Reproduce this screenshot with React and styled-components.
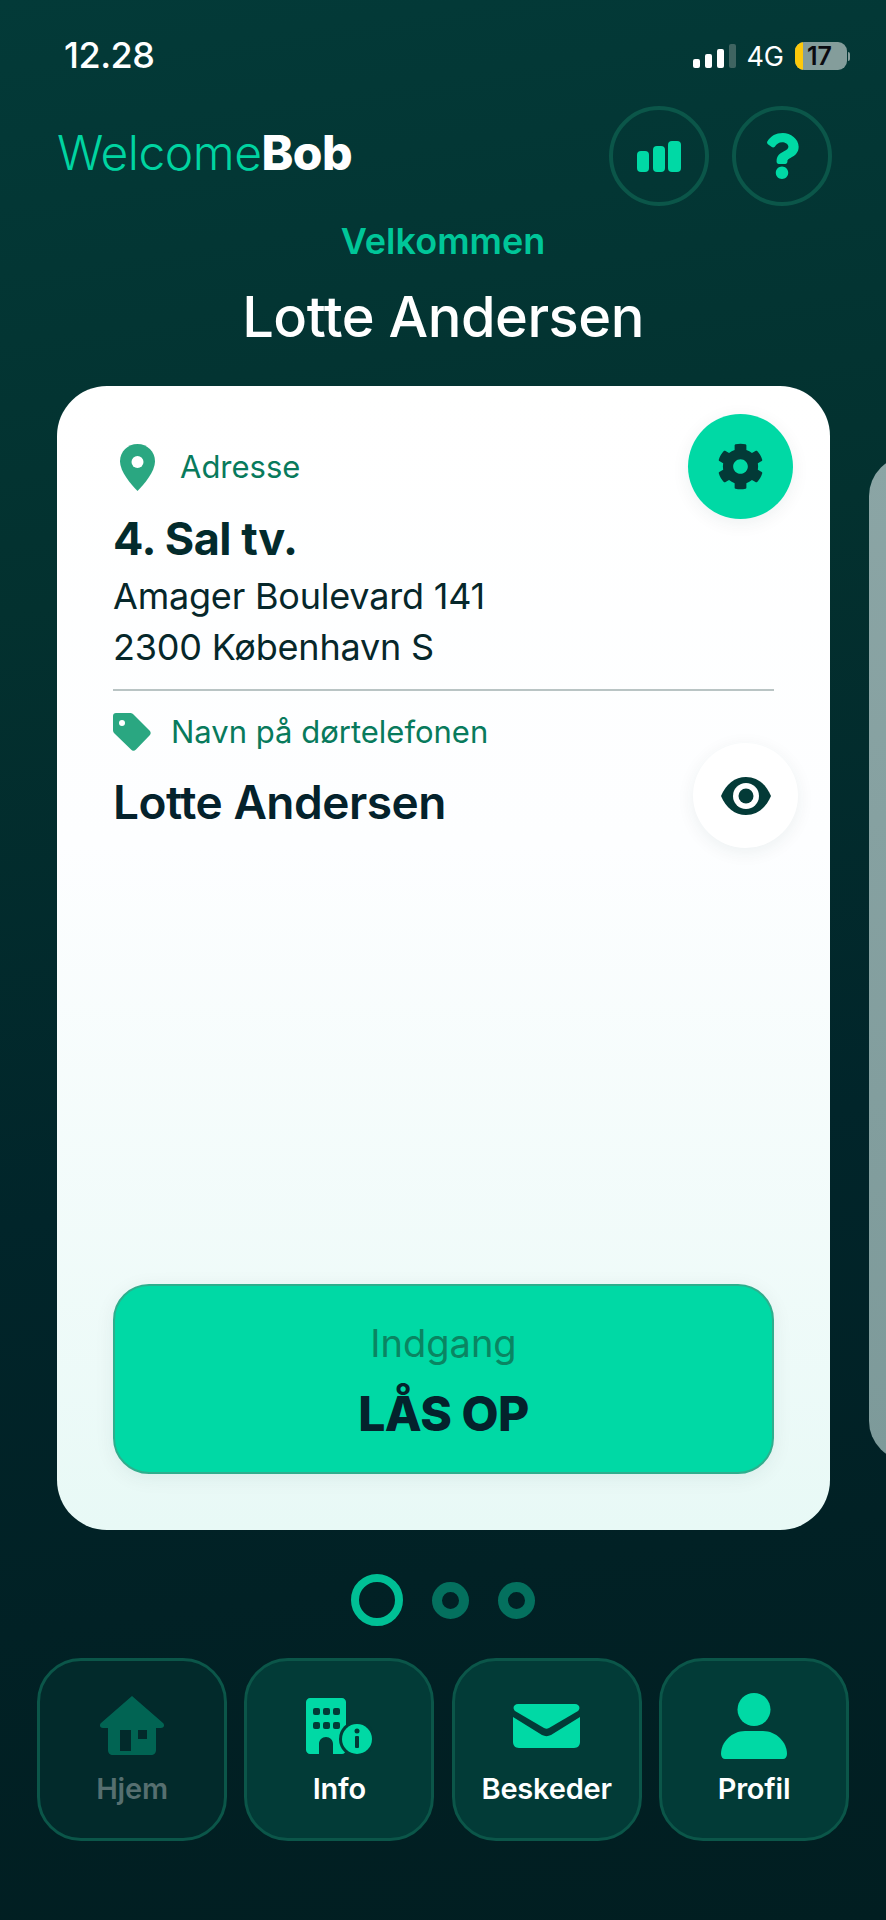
import styled, { createGlobalStyle } from "styled-components";
import { FaCog, FaQuestion } from "react-icons/fa";

const GlobalStyle = createGlobalStyle`
    html, body {
        margin: 0;
        padding: 0;
        background: #012024;
    }
    * {
        box-sizing: border-box;
    }
`

const Page = styled.div`
    width: 886px;
    height: 1920px;
    overflow: hidden;
    display: flex;
    flex-direction: column;
    font-family: "Inter", "Noto Sans", sans-serif;
    background: linear-gradient(172deg, #033a38 0%, #03312f 30%, #01252a 60%, #012125 80%, #011e21 100%);
`

const StatusBar = styled.div`
    height: 106px;
    padding: 36px 36px 0 64px;
    display: flex;
    justify-content: space-between;
    align-items: flex-start;
    color: #fff;
`
const Time = styled.div`
    font-size: 36px;
    line-height: 38px;
    font-weight: 500;
    letter-spacing: -0.5px;
`
const StatusIcons = styled.div`
    display: flex;
    align-items: center;
    height: 36px;
    margin-top: 2px;
`
const Signal = styled.div`
    display: flex;
    align-items: flex-end;
    gap: 5px;
    height: 24px;
    margin-right: 10px;
`
const SignalBar = styled.div`
    width: 7px;
    height: ${props => props.h}px;
    border-radius: 2px;
    background: ${props => props.off ? "#3f6461" : "#fff"};
`
const Network = styled.div`
    font-size: 27px;
    font-weight: 400;
    margin-right: 11px;
`
const BatteryWrap = styled.div`
    display: flex;
    align-items: center;
    gap: 1px;
`
const Battery = styled.div`
    width: 52px;
    height: 28px;
    border-radius: 9px;
    overflow: hidden;
    display: flex;
    align-items: center;
    background: #849d9b;
    color: #0b0b10;
    font-size: 25px;
    font-weight: 600;
`
const BatteryFill = styled.div`
    width: 8px;
    height: 100%;
    background: #fdc90a;
    margin-right: 4px;
`
const BatteryTip = styled.div`
    width: 2px;
    height: 9px;
    border-radius: 0 2px 2px 0;
    background: #849d9b;
`

const Header = styled.div`
    height: 100px;
    padding: 0 54px 0 57px;
    display: flex;
    align-items: center;
    justify-content: space-between;
`
const Logo = styled.div`
    font-size: 48px;
    font-weight: 300;
    letter-spacing: -0.5px;
    color: #00d4a1;
    margin-top: -8px;
`
const LogoBold = styled.span`
    font-weight: 800;
    color: #fff;
`
const HeaderButtons = styled.div`
    display: flex;
    gap: 23px;
`
const RoundButton = styled.div`
    width: 100px;
    height: 100px;
    border-radius: 50%;
    border: 4px solid #0b5649;
    display: flex;
    align-items: center;
    justify-content: center;
    color: #00d9a5;
`

const Greeting = styled.div`
    margin-top: 11px;
    text-align: center;
    font-size: 36px;
    line-height: 48px;
    font-weight: 600;
    color: #00c699;
`
const UserName = styled.h1`
    margin: 18px 0 0;
    text-align: center;
    font-size: 56px;
    line-height: 68px;
    font-weight: 500;
    letter-spacing: -0.5px;
    color: #fff;
`

const Carousel = styled.div`
    margin-top: 35px;
    padding-left: 57px;
    display: flex;
    align-items: center;
    gap: 39px;
`
const Card = styled.div`
    position: relative;
    flex: none;
    width: 773px;
    height: 1144px;
    padding: 57px 56px 56px;
    display: flex;
    flex-direction: column;
    border-radius: 50px;
    background: linear-gradient(180deg, #ffffff 0%, #fdfeff 40%, #e8f9f6 100%);
`
const NextCard = styled.div`
    flex: none;
    width: 772px;
    height: 1005px;
    border-radius: 40px;
    background: linear-gradient(180deg, #8ba5a5 0%, #7d9a9a 100%);
`
const FloatingButton = styled.div`
    position: absolute;
    top: ${props => props.top}px;
    right: ${props => props.right}px;
    width: 105px;
    height: 105px;
    border-radius: 50%;
    display: flex;
    align-items: center;
    justify-content: center;
    color: #033a37;
    background: ${props => props.green ? "#00d9a5" : "#fff"};
    box-shadow: 0 4px 18px rgba(0, 60, 50, 0.07);
`
const LabelRow = styled.div`
    display: flex;
    align-items: center;
    gap: ${props => props.gap}px;
    padding-left: ${props => props.inset}px;
    height: 48px;
`
const Label = styled.div`
    font-size: 31px;
    line-height: 40px;
    font-weight: 400;
    color: #087a5c;
`
const Floor = styled.div`
    margin: 20px 0 4px;
    font-size: 45px;
    line-height: 56px;
    font-weight: 700;
    letter-spacing: -0.5px;
    color: #032b2c;
`
const AddressLine = styled.div`
    font-size: 36px;
    line-height: 51px;
    font-weight: 400;
    letter-spacing: -0.2px;
    color: #06272a;
`
const Divider = styled.div`
    margin-top: 16px;
    height: 2px;
    background: #b9c4c4;
`
const DoorRow = styled.div`
    margin-top: 17px;
`
const DoorName = styled.div`
    margin-top: 18px;
    font-size: 46px;
    line-height: 56px;
    font-weight: 600;
    letter-spacing: -0.5px;
    color: #04222c;
`
const UnlockButton = styled.div`
    margin-top: auto;
    height: 190px;
    border-radius: 36px;
    border: 2px solid #2fae8d;
    background: #00d9a5;
    box-shadow: 0 4px 20px rgba(0, 60, 50, 0.07);
    display: flex;
    flex-direction: column;
    align-items: center;
    padding-top: 34px;
`
const UnlockLabel = styled.div`
    font-size: 38px;
    line-height: 46px;
    font-weight: 400;
    color: #0a8562;
`
const UnlockText = styled.div`
    margin-top: 20px;
    font-size: 48px;
    line-height: 56px;
    font-weight: 800;
    letter-spacing: -0.5px;
    color: #04222c;
`

const Dots = styled.div`
    margin-top: 44px;
    height: 52px;
    display: flex;
    align-items: center;
    justify-content: center;
    gap: 29px;
`
const Dot = styled.div`
    width: ${props => props.active ? 52 : 37}px;
    height: ${props => props.active ? 52 : 37}px;
    border-radius: 50%;
    border: ${props => props.active ? "8px solid #00bf95" : "10px solid #04705e"};
`

const Nav = styled.div`
    margin-top: 32px;
    padding: 0 37px;
    display: grid;
    grid-template-columns: repeat(4, 190px);
    justify-content: space-between;
`
const NavTile = styled.div`
    height: 183px;
    border-radius: 44px;
    border: 3px solid #0b5649;
    background: ${props => props.dim ? "#022a2b" : "#023b37"};
    display: flex;
    flex-direction: column;
    align-items: center;
`
const NavIcon = styled.div`
    height: 94px;
    width: 100%;
    margin-top: 18px;
    display: flex;
    align-items: center;
    justify-content: center;
    opacity: ${props => props.dim ? 0.33 : 1};
`
const NavLabel = styled.div`
    margin-top: -2px;
    font-size: 29px;
    line-height: 36px;
    font-weight: 600;
    letter-spacing: -0.2px;
    color: ${props => props.dim ? "#566f70" : "#fff"};
`

const BarsIcon = () => (
    <svg width="44" height="31" viewBox="0 0 44 31" fill="#00d9a5">
        <rect x="0" y="10" width="12" height="21" rx="4" />
        <rect x="16" y="5" width="12" height="26" rx="4" />
        <rect x="31" y="0" width="13" height="31" rx="4" />
    </svg>
)

const EyeIcon = () => (
    <svg width="52" height="38" viewBox="0 0 52 38">
        <path d="M1 19C6 7 15 0 26 0s20 7 25 19c-5 12-14 19-25 19S6 31 1 19z" fill="#033a37" />
        <circle cx="26" cy="19" r="13" fill="#fff" />
        <circle cx="26" cy="19" r="7.500" fill="#033a37" />
    </svg>
)

const PinIcon = () => (
    <svg width="35" height="47" viewBox="0 0 35 47">
        <path d="M17.5 0C7.8 0 0 7.6 0 17.2 0 28 11 40 17.5 47 24 40 35 28 35 17.2 35 7.6 27.2 0 17.5 0z" fill="#2aa781" />
        <circle cx="17.5" cy="18" r="6" fill="#fff" />
    </svg>
)

const TagIcon = () => (
    <svg width="38" height="38" viewBox="0 0 38 38">
        <path d="M3 0h14c1.5 0 2.5.5 3.5 1.5l16 16c1.6 1.6 1.6 3.6 0 5L23 36.500c-1.600 1.600-3.600 1.600-5 0L1.500 20.500C.5 19.500 0 18.500 0 17V3c0-1.800 1.200-3 3-3z" fill="#2aa781" />
        <circle cx="9" cy="10" r="3" fill="#fff" />
    </svg>
)

const HomeIcon = () => (
    <svg width="66" height="60" viewBox="0 0 66 60" fill="#00d9a5">
        <path fillRule="evenodd" d="M33 0 64 27c2 2 1 5-2 5h-5v22c0 3-2 5-5 5H14c-3 0-5-2-5-5V32H4c-3 0-4-3-2-5zM21 34v21h11V34zM39 34v9h9v-9z" />
    </svg>
)

const BuildingIcon = () => (
    <svg width="67" height="56" viewBox="0 0 67 56">
        <path fillRule="evenodd" d="M4 0h32c2 0 4 2 4 4v48c0 2-2 4-4 4H27V46c0-4-3-7-7-7s-7 3-7 7v10H4c-2 0-4-2-4-4V4c0-2 2-4 4-4z" fill="#00d9a5" />
        <g fill="#023b37">
            <rect x="7" y="10" width="7" height="7" rx="2" />
            <rect x="17" y="10" width="7" height="7" rx="2" />
            <rect x="27" y="10" width="7" height="7" rx="2" />
            <rect x="7" y="24" width="7" height="7" rx="2" />
            <rect x="17" y="24" width="7" height="7" rx="2" />
            <rect x="27" y="24" width="7" height="7" rx="2" />
        </g>
        <circle cx="51" cy="41" r="18" fill="#023b37" />
        <circle cx="51" cy="41" r="15" fill="#00d9a5" />
        <circle cx="51" cy="33" r="2.500" fill="#023b37" />
        <rect x="49" y="38" width="4" height="12" rx="1" fill="#023b37" />
    </svg>
)

const MailIcon = () => (
    <svg width="67" height="44" viewBox="0 0 67 44" fill="#00d9a5">
        <path d="M5 0h57c4 0 6 4 3 7L36 24c-2 1-3 1-5 0L2 7C-1 4 1 0 5 0z" />
        <path d="M0 13l29 18c3 1.500 6 1.500 9 0l29-18v25c0 3-2 6-6 6H6c-4 0-6-3-6-6z" />
    </svg>
)

const PersonIcon = () => (
    <svg width="66" height="66" viewBox="0 0 66 66" fill="#00d9a5">
        <circle cx="33" cy="16.500" r="16.500" />
        <path d="M24 38h18c13 0 24 11 24 23 0 3-2 5-4 5H4c-2 0-4-2-4-5 0-12 11-23 24-23z" />
    </svg>
)

const tiles = [
    { label: "Hjem", icon: <HomeIcon />, dim: true },
    { label: "Info", icon: <BuildingIcon /> },
    { label: "Beskeder", icon: <MailIcon /> },
    { label: "Profil", icon: <PersonIcon /> },
]

export default function App() {
    return (
        <Page>
            <GlobalStyle />
            <StatusBar>
                <Time>12.28</Time>
                <StatusIcons>
                    <Signal>
                        <SignalBar h={9} />
                        <SignalBar h={14} />
                        <SignalBar h={19} />
                        <SignalBar h={24} off />
                    </Signal>
                    <Network>4G</Network>
                    <BatteryWrap>
                        <Battery>
                            <BatteryFill />
                            17
                        </Battery>
                        <BatteryTip />
                    </BatteryWrap>
                </StatusIcons>
            </StatusBar>
            <Header>
                <Logo>Welcome<LogoBold>Bob</LogoBold></Logo>
                <HeaderButtons>
                    <RoundButton><BarsIcon /></RoundButton>
                    <RoundButton><FaQuestion size={46} /></RoundButton>
                </HeaderButtons>
            </Header>
            <Greeting>Velkommen</Greeting>
            <UserName>Lotte Andersen</UserName>
            <Carousel>
                <Card>
                    <FloatingButton green top={28} right={37}><FaCog size={47} /></FloatingButton>
                    <FloatingButton top={357} right={32}><EyeIcon /></FloatingButton>
                    <LabelRow gap={25} inset={7}>
                        <PinIcon />
                        <Label>Adresse</Label>
                    </LabelRow>
                    <Floor>4. Sal tv.</Floor>
                    <AddressLine>Amager Boulevard 141</AddressLine>
                    <AddressLine>2300 København S</AddressLine>
                    <Divider />
                    <DoorRow>
                        <LabelRow gap={20} inset={0}>
                            <TagIcon />
                            <Label>Navn på dørtelefonen</Label>
                        </LabelRow>
                    </DoorRow>
                    <DoorName>Lotte Andersen</DoorName>
                    <UnlockButton>
                        <UnlockLabel>Indgang</UnlockLabel>
                        <UnlockText>LÅS OP</UnlockText>
                    </UnlockButton>
                </Card>
                <NextCard />
            </Carousel>
            <Dots>
                <Dot active />
                <Dot />
                <Dot />
            </Dots>
            <Nav>
                {tiles.map(tile => (
                    <NavTile key={tile.label} dim={tile.dim}>
                        <NavIcon dim={tile.dim}>{tile.icon}</NavIcon>
                        <NavLabel dim={tile.dim}>{tile.label}</NavLabel>
                    </NavTile>
                ))}
            </Nav>
        </Page>
    )
}
